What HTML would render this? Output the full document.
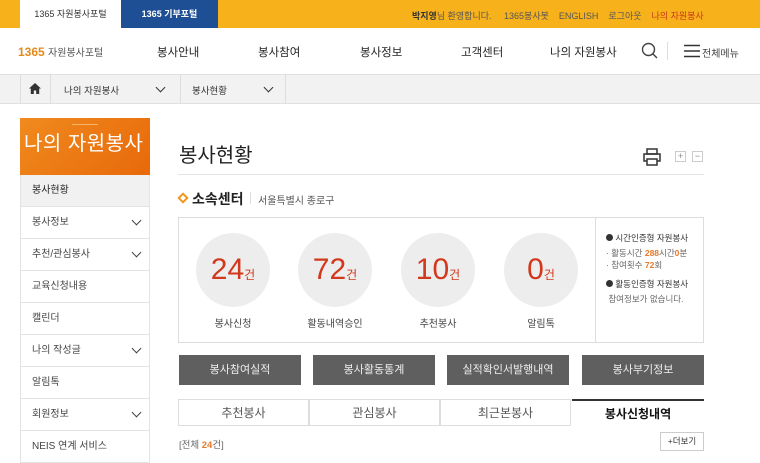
<!DOCTYPE html>
<html><head><meta charset="utf-8"><style>
*{margin:0;padding:0;box-sizing:border-box}
body{width:760px;height:460px;overflow:hidden;background:#fff;font-family:"Liberation Sans","Noto Sans CJK KR",sans-serif;color:#333;position:relative}
.a{position:absolute}
.top{left:0;top:0;width:760px;height:28px;background:#f7b21b}
.menu div{position:absolute;left:20px;width:130px;height:32px;border-bottom:1px solid #e3e3e3;border-left:1px solid #e3e3e3;border-right:1px solid #e3e3e3;font-size:10px;line-height:31px;padding-left:11px;color:#444}
.chev{position:absolute;right:9px;top:10px;width:7px;height:7px;border-right:1.5px solid #444;border-bottom:1.5px solid #444;transform:rotate(45deg)}
.circ{position:absolute;width:74px;height:74px;border-radius:50%;background:#ededed;text-align:center;line-height:74px;color:#d2381c;font-size:30px}
.circ small{font-size:12px;color:#d2381c}
.lab{position:absolute;width:100px;text-align:center;font-size:10px;color:#444}
.btn{position:absolute;top:355px;height:30px;width:122px;background:#5f5f5f;color:#eee;font-size:11px;text-align:center;line-height:30px}
.tab{position:absolute;top:399px;height:27px;width:131px;text-align:center;line-height:26px;font-size:12px;color:#555;border:1px solid #ddd}
</style></head><body>
<div class="a top"></div>
<div class="a" style="left:20px;top:0;width:101px;height:28px;background:#fff;font-size:9px;line-height:28px;text-align:center;color:#333">1365 자원봉사포털</div>
<div class="a" style="left:121px;top:0;width:97px;height:28px;background:#1e4f95;font-size:9px;line-height:28px;text-align:center;color:#fff;font-weight:bold">1365 기부포털</div>
<div class="a" style="left:412px;top:9px;font-size:9px;color:#555;white-space:nowrap"><b style="color:#333">박지영</b>님 환영합니다. &nbsp;&nbsp;&nbsp;&nbsp;1365봉사봇 &nbsp;&nbsp;&nbsp;ENGLISH &nbsp;&nbsp;&nbsp;로그아웃 &nbsp;&nbsp;&nbsp;<span style="color:#c8381a">나의 자원봉사</span></div>
<div class="a" style="left:18px;top:44px;font-size:12px;color:#555;white-space:nowrap"><span style="color:#e38a1a;font-weight:bold">1365</span> <span style="font-size:10px">자원봉사포털</span></div>
<div class="a" style="left:157px;top:44px;font-size:11.5px;color:#222">봉사안내</div>
<div class="a" style="left:258px;top:44px;font-size:11.5px;color:#222">봉사참여</div>
<div class="a" style="left:360px;top:44px;font-size:11.5px;color:#222">봉사정보</div>
<div class="a" style="left:461px;top:44px;font-size:11.5px;color:#222">고객센터</div>
<div class="a" style="left:550px;top:44px;font-size:11.5px;color:#222">나의 자원봉사</div>
<svg class="a" style="left:641px;top:42px" width="18" height="18"><circle cx="7.5" cy="7.5" r="6" fill="none" stroke="#444" stroke-width="1.4"/><line x1="12" y1="12" x2="16" y2="16" stroke="#444" stroke-width="1.5"/></svg>
<div class="a" style="left:667px;top:42px;width:1px;height:18px;background:#ddd"></div>
<svg class="a" style="left:684px;top:44px" width="16" height="14"><path d="M0 1.5H16M0 7H16M0 12.5H16" stroke="#333" stroke-width="1.6"/></svg>
<div class="a" style="left:702px;top:45px;font-size:10px;color:#444">전체메뉴</div>
<div class="a" style="left:0;top:74px;width:760px;height:30px;background:#f2f2f2;border-top:1px solid #e0e0e0;border-bottom:1px solid #e0e0e0"></div>
<div class="a" style="left:20px;top:74px;width:1px;height:30px;background:#ddd"></div>
<div class="a" style="left:50px;top:74px;width:1px;height:30px;background:#ddd"></div>
<div class="a" style="left:180px;top:74px;width:1px;height:30px;background:#ddd"></div>
<div class="a" style="left:285px;top:74px;width:1px;height:30px;background:#ddd"></div>
<svg class="a" style="left:29px;top:83px" width="12" height="11"><path d="M6 0L0 5.5H1.8V11H4.8V7.5H7.2V11H10.2V5.5H12Z" fill="#333"/></svg>
<div class="a" style="left:64px;top:83px;font-size:9.5px;color:#333">나의 자원봉사</div>
<div class="chev" style="left:157px;top:84px;right:auto;border-color:#333"></div>
<div class="a" style="left:192px;top:83px;font-size:9.5px;color:#333">봉사현황</div>
<div class="chev" style="left:265px;top:84px;right:auto;border-color:#333"></div>
<div class="a" style="left:20px;top:118px;width:130px;height:57px;background:linear-gradient(135deg,#f08a1e,#e8690a)"></div>
<div class="a" style="left:72px;top:124px;width:26px;height:1px;background:#f7b56a"></div>
<div class="a" style="left:24px;top:127px;font-size:20px;letter-spacing:0.5px;color:#fff;white-space:nowrap">나의 자원봉사</div>
<div class="menu">
<div style="top:175px;background:#f1f1f1;color:#222">봉사현황</div>
<div style="top:207px">봉사정보<span class="chev"></span></div>
<div style="top:239px">추천/관심봉사<span class="chev"></span></div>
<div style="top:271px">교육신청내용</div>
<div style="top:303px">캘린더</div>
<div style="top:335px">나의 작성글<span class="chev"></span></div>
<div style="top:367px">알림톡</div>
<div style="top:399px">회원정보<span class="chev"></span></div>
<div style="top:431px">NEIS 연계 서비스</div>
</div>
<div class="a" style="left:179px;top:139px;font-size:20px;color:#222">봉사현황</div>
<div class="a" style="left:178px;top:174px;width:526px;height:1px;background:#e5e5e5"></div>
<svg class="a" style="left:643px;top:148px" width="18" height="18"><rect x="4" y="1" width="10" height="5" fill="none" stroke="#333" stroke-width="1.5"/><rect x="1" y="6" width="16" height="7" fill="none" stroke="#333" stroke-width="1.5"/><rect x="4" y="11" width="10" height="6" fill="#fff" stroke="#333" stroke-width="1.5"/></svg>
<div class="a" style="left:675px;top:151px;width:11px;height:11px;border:1px solid #ccc;font-size:9px;line-height:9px;text-align:center;color:#888">+</div>
<div class="a" style="left:692px;top:151px;width:11px;height:11px;border:1px solid #ccc;font-size:9px;line-height:9px;text-align:center;color:#888">−</div>
<div class="a" style="left:179px;top:194px;width:8px;height:8px;border:2px solid #f0961e;transform:rotate(45deg)"></div>
<div class="a" style="left:192px;top:189px;font-size:14px;font-weight:bold;color:#222">소속센터</div>
<div class="a" style="left:250px;top:192px;width:1px;height:12px;background:#ddd"></div>
<div class="a" style="left:258px;top:192px;font-size:10px;color:#555">서울특별시 종로구</div>
<div class="a" style="left:178px;top:217px;width:526px;height:126px;border:1px solid #ddd"></div>
<div class="a" style="left:595px;top:217px;width:1px;height:126px;background:#ddd"></div>
<div class="circ" style="left:196px;top:233px">24<small>건</small></div>
<div class="circ" style="left:298px;top:233px">72<small>건</small></div>
<div class="circ" style="left:401px;top:233px">10<small>건</small></div>
<div class="circ" style="left:504px;top:233px">0<small>건</small></div>
<div class="lab" style="left:183px;top:315px">봉사신청</div>
<div class="lab" style="left:285px;top:315px">활동내역승인</div>
<div class="lab" style="left:388px;top:315px">추천봉사</div>
<div class="lab" style="left:491px;top:315px">알림톡</div>
<div class="a" style="left:606px;top:232px;font-size:8.5px;color:#333;line-height:12px;white-space:nowrap">
<div><span style="display:inline-block;width:7px;height:7px;border-radius:50%;background:#333"></span> 시간인증형 자원봉사</div>
<div style="color:#666;margin-top:3px">· 활동시간 <b style="color:#e7792a">288</b>시간<b style="color:#e7792a">0</b>분</div>
<div style="color:#666">· 참여횟수 <b style="color:#e7792a">72</b>회</div>
<div style="margin-top:7px"><span style="display:inline-block;width:7px;height:7px;border-radius:50%;background:#333"></span> 활동인증형 자원봉사</div>
<div style="color:#666;margin-top:3px">&nbsp;참여정보가 없습니다.</div>
</div>
<div class="btn" style="left:179px">봉사참여실적</div>
<div class="btn" style="left:313px">봉사활동통계</div>
<div class="btn" style="left:447px">실적확인서발행내역</div>
<div class="btn" style="left:582px">봉사부기정보</div>
<div class="tab" style="left:178px">추천봉사</div>
<div class="tab" style="left:309px">관심봉사</div>
<div class="tab" style="left:440px">최근본봉사</div>
<div class="tab" style="left:572px;width:132px;border:none;border-top:2px solid #333;font-weight:bold;color:#111">봉사신청내역</div>
<div class="a" style="left:179px;top:437px;font-size:9.5px;color:#666">[전체 <b style="color:#e7792a">24</b>건]</div>
<div class="a" style="left:660px;top:432px;width:44px;height:19px;border:1px solid #ccc;font-size:8.5px;line-height:17px;text-align:center;color:#333">+더보기</div>
</body></html>
